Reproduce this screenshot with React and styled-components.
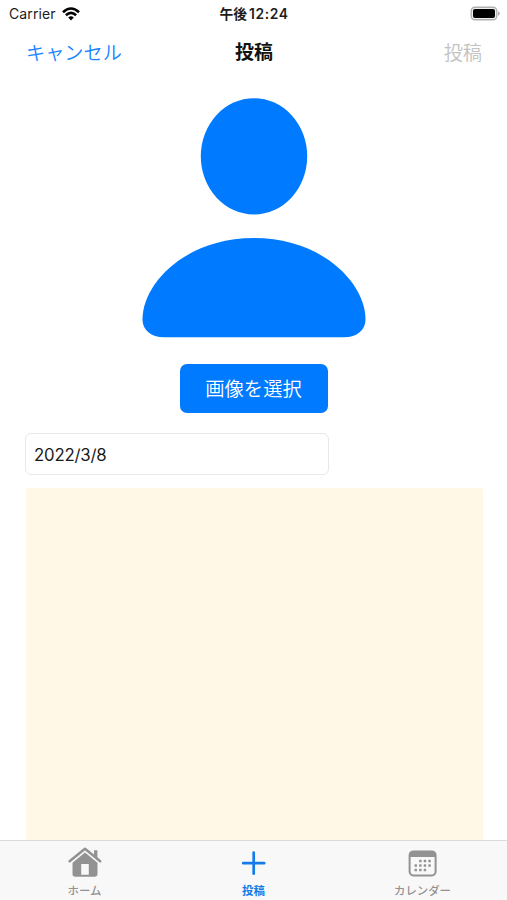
import React, { useState } from 'react'
import styled, { createGlobalStyle } from 'styled-components'

const GlobalStyle = createGlobalStyle`
    * {
        box-sizing: border-box;
    }
    body {
        margin: 0;
        background: #fff;
        font-family: Inter, "Noto Sans CJK JP", sans-serif;
    }
    button, input, textarea {
        font-family: inherit;
        margin: 0;
    }
`

const Screen = styled.div`
    display: flex;
    flex-direction: column;
    width: 100%;
    height: 900px;
    overflow: hidden;
    background: #fff;
`

const StatusBar = styled.header`
    display: grid;
    grid-template-columns: 1fr auto 1fr;
    align-items: center;
    height: 27px;
    padding: 0 7px 0 9px;
    font-size: 14px;
    line-height: 27px;
    color: #1c1c1c;
`

const Carrier = styled.div`
    display: flex;
    align-items: center;
    gap: 6px;
    letter-spacing: 0.1px;
`

const Clock = styled.div`
    display: flex;
    gap: 2px;
    height: 27px;
    margin-right: 1px;
    padding-top: 2px;
    font-size: 13.8px;
    font-weight: 600;
    line-height: 25px;
    letter-spacing: 0.6px;
    span:first-child {
        letter-spacing: 0;
    }
`

const BatteryIcon = styled.svg`
    justify-self: end;
`

const NavBar = styled.nav`
    display: grid;
    grid-template-columns: 1fr auto 1fr;
    align-items: center;
    height: 50px;
    padding: 2px 25px 0 26px;
`

const NavButton = styled.button`
    justify-self: ${({ $right }) => $right ? 'end' : 'start'};
    padding: 0;
    border: none;
    background: none;
    font-size: 19.2px;
    font-weight: 350;
    line-height: 28px;
    color: #1783ff;
    &:disabled {
        color: #c2c2c2;
    }
`

const NavTitle = styled.h1`
    margin: 0;
    font-size: 19px;
    font-weight: 600;
    line-height: 28px;
    color: #111;
`

const Form = styled.main`
    display: flex;
    flex-direction: column;
    flex: 1;
    min-height: 0;
    padding: 21px 24px 0 25px;
`

const Avatar = styled.svg`
    align-self: center;
    flex: none;
    fill: #007aff;
`

const SelectButton = styled.button`
    align-self: center;
    flex: none;
    width: 148px;
    height: 49px;
    margin-top: 26px;
    padding: 2px 1px 0 0;
    border: none;
    border-radius: 7px;
    background: #007aff;
    color: #fff;
    font-size: 19.3px;
    font-weight: 350;
    line-height: 47px;
`

const DateInput = styled.input`
    flex: none;
    width: 304px;
    height: 42px;
    margin-top: 20px;
    padding: 2px 8px 0;
    border: 1px solid #e8e8e8;
    border-radius: 6px;
    outline: none;
    font-size: 16.8px;
    letter-spacing: -0.2px;
    color: #1a1a1a;
`

const Memo = styled.textarea`
    flex: 1;
    margin: 13px 0 0 1px;
    padding: 8px;
    border: none;
    border-radius: 2px 2px 0 0;
    outline: none;
    resize: none;
    background: #fff8e6;
    font-size: 16px;
`

const TabBar = styled.footer`
    display: grid;
    grid-template-columns: repeat(3, 1fr);
    flex: none;
    height: 60px;
    border-top: 1px solid #dadada;
    background: #f8f8f8;
`

const Tab = styled.button`
    display: flex;
    flex-direction: column;
    align-items: center;
    padding: 5px 0 0;
    border: none;
    background: none;
    color: ${({ $active }) => $active ? '#147ce8' : '#929292'};
    svg {
        width: 36px;
        height: 34px;
    }
`

const TabLabel = styled.span`
    margin-top: 3px;
    font-size: 11.4px;
    font-weight: ${({ $active }) => $active ? 600 : 500};
    line-height: 16px;
`

const WifiIcon = () => (
    <svg width="18" height="14" viewBox="0 0 18 14" fill="none" stroke="#000" strokeWidth="2.6">
        <path d="M1 5.2 Q9 -2.2 17 5.2" />
        <path d="M3.9 8.3 Q9 3.5 14.1 8.3" />
        <path d="M9 13.5 L6.2 10.6 Q9 8.1 11.8 10.6 Z" fill="#000" stroke="none" />
    </svg>
)

const HomeIcon = () => (
    <svg viewBox="0 0 36 34" fill="currentColor">
        <path d="M2.6 15.2 L18 2.7 L33.2 15.2" fill="none" stroke="currentColor" strokeWidth="2.5" strokeLinecap="round" strokeLinejoin="round" />
        <path d="M27 4.2h3.4v8.6L27 9.8z" />
        <path fillRule="evenodd" d="M18 6.6 L30.5 16.8 V28 a2.8 2.8 0 0 1-2.8 2.8 H8.3 A2.8 2.8 0 0 1 5.5 28 V16.8 Z M14.2 18 V28.7 H21.8 V18 Z" />
    </svg>
)

const PlusIcon = () => (
    <svg viewBox="0 0 36 34" stroke="currentColor" strokeWidth="2.7" strokeLinecap="round">
        <path d="M17.7 6.7V27.7M7.2 17.2H28.2" />
    </svg>
)

// [column, row] of each day dot
const days = [
    [1, 0], [2, 0], [3, 0],
    [0, 1], [1, 1], [2, 1], [3, 1],
    [0, 2], [1, 2], [2, 2],
]

const CalendarIcon = () => (
    <svg viewBox="0 0 36 34" fill="currentColor">
        <rect x="4.6" y="5.4" width="26" height="24" rx="3.8" fill="none" stroke="currentColor" strokeWidth="2" />
        <path d="M4.500 11V8.4a3 3 0 0 1 3-3h20a3 3 0 0 1 3 3V11z" />
        {days.map(([x, y]) => (
            <rect key={`${x}-${y}`} x={9.5 + x * 4.6} y={13.8 + y * 4.5} width="2.5" height="2.5" rx="0.6" />
        ))}
    </svg>
)

const tabs = [
    { id: 'home', label: 'ホーム', Icon: HomeIcon },
    { id: 'post', label: '投稿', Icon: PlusIcon },
    { id: 'calendar', label: 'カレンダー', Icon: CalendarIcon },
]

const App = () => {
    const [date, setDate] = useState('2022/3/8')
    const [memo, setMemo] = useState('')
    const [tab, setTab] = useState('post')

    return (
        <Screen>
            <GlobalStyle />
            <StatusBar>
                <Carrier>Carrier <WifiIcon /></Carrier>
                <Clock><span>午後</span><span>12:24</span></Clock>
                <BatteryIcon width="31" height="15" viewBox="0 0 31 15">
                    <rect x="2.2" y="1.2" width="25.6" height="12.6" rx="3.8" fill="#eee" stroke="#b0b0b0" strokeWidth="1.4" />
                    <rect x="4" y="3.1" width="22" height="8.8" rx="2" fill="#000" />
                    <path d="M29.1 5.3q1.7.8 1.7 2.2t-1.7 2.2z" fill="#a5a5a5" />
                </BatteryIcon>
            </StatusBar>
            <NavBar>
                <NavButton>キャンセル</NavButton>
                <NavTitle>投稿</NavTitle>
                <NavButton $right disabled>投稿</NavButton>
            </NavBar>
            <Form>
                <Avatar width="224" height="240" viewBox="0 0 224 240">
                    <ellipse cx="112" cy="58.3" rx="53.2" ry="58.1" />
                    <path d="M112 140 C180 140 223.5 185 223.5 221.5 C223.5 232 215 239.3 202 239.3 H22 C9 239.3 0.5 232 0.5 221.5 C0.5 185 44 140 112 140 Z" />
                </Avatar>
                <SelectButton>画像を選択</SelectButton>
                <DateInput value={date} onChange={(e) => setDate(e.target.value)} />
                <Memo value={memo} onChange={(e) => setMemo(e.target.value)} />
            </Form>
            <TabBar>
                {tabs.map(({ id, label, Icon }) => (
                    <Tab key={id} $active={tab === id} onClick={() => setTab(id)}>
                        <Icon />
                        <TabLabel $active={tab === id}>{label}</TabLabel>
                    </Tab>
                ))}
            </TabBar>
        </Screen>
    )
}

export default App
